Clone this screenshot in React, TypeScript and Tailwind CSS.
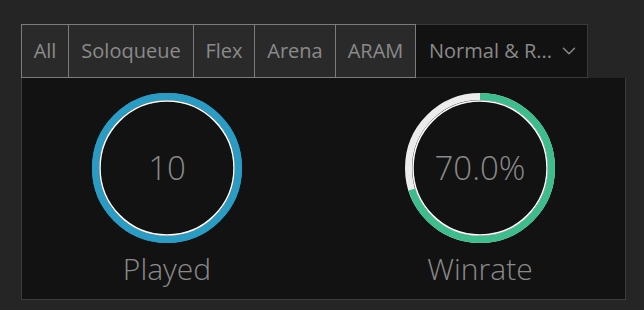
import { ChevronDown } from 'lucide-react';

const TABS = [
  { label: 'All', w: 'w-[48px]' },
  { label: 'Soloqueue', w: 'w-[126px]' },
  { label: 'Flex', w: 'w-[62px]' },
  { label: 'Arena', w: 'w-[82px]' },
  { label: 'ARAM', w: 'w-[81px]' },
];

const R = 71.5;
const C = 2 * Math.PI * R;

function Ring({ value, label, pct, color, track }: { value: string; label: string; pct: number; color: string; track: string }) {
  return (
    <div className="flex flex-col items-center">
      <div className="relative h-[150px] w-[150px]">
        <svg width="150" height="150" viewBox="0 0 150 150" className="-rotate-90">
          <circle cx="75" cy="75" r={R} fill="none" stroke={track} strokeWidth="7" />
          <circle
            cx="75"
            cy="75"
            r={R}
            fill="none"
            stroke={color}
            strokeWidth="7"
            strokeDasharray={`${C * pct} ${C}`}
          />
          <circle cx="75" cy="75" r="67" fill="none" stroke="#ffffff" strokeWidth="1.5" />
        </svg>
        <div className="absolute inset-0 flex items-center justify-center text-[33px] font-light text-[#8a8a8a]">
          {value}
        </div>
      </div>
      <div className="mt-[7px] text-[30px] font-light leading-[38px] text-[#8a8a8a]">{label}</div>
    </div>
  );
}

export default function App() {
  return (
    <div className="h-[310px] w-[644px] bg-[#252525] pl-[21px] pt-[24px] font-['Open_Sans',sans-serif]">
      <div className="flex h-[54px] w-max text-[20px] text-[#8a8a8a]">
        {TABS.map((t) => (
          <div
            key={t.label}
            className={`-ml-px flex items-center justify-center border border-[#7c7c7c] bg-[#2a2a2a] first:ml-0 ${t.w}`}
          >
            {t.label}
          </div>
        ))}
        <div className="flex w-[172px] items-center justify-between border border-l-0 border-[#3a3a3a] bg-[#121212] pl-[13px] pr-[7px]">
          <span>Normal &amp; R...</span>
          <ChevronDown size={22} strokeWidth={1.6} />
        </div>
      </div>
      <div className="flex h-[222px] w-[605px] justify-center gap-[163px] border border-t-0 border-[#3c3c3c] bg-[#121212] pt-[15px]">
        <Ring value="10" label="Played" pct={1} color="#2a9cc3" track="#2a9cc3" />
        <Ring value="70.0%" label="Winrate" pct={0.7} color="#3dbd8b" track="#ececec" />
      </div>
    </div>
  );
}
